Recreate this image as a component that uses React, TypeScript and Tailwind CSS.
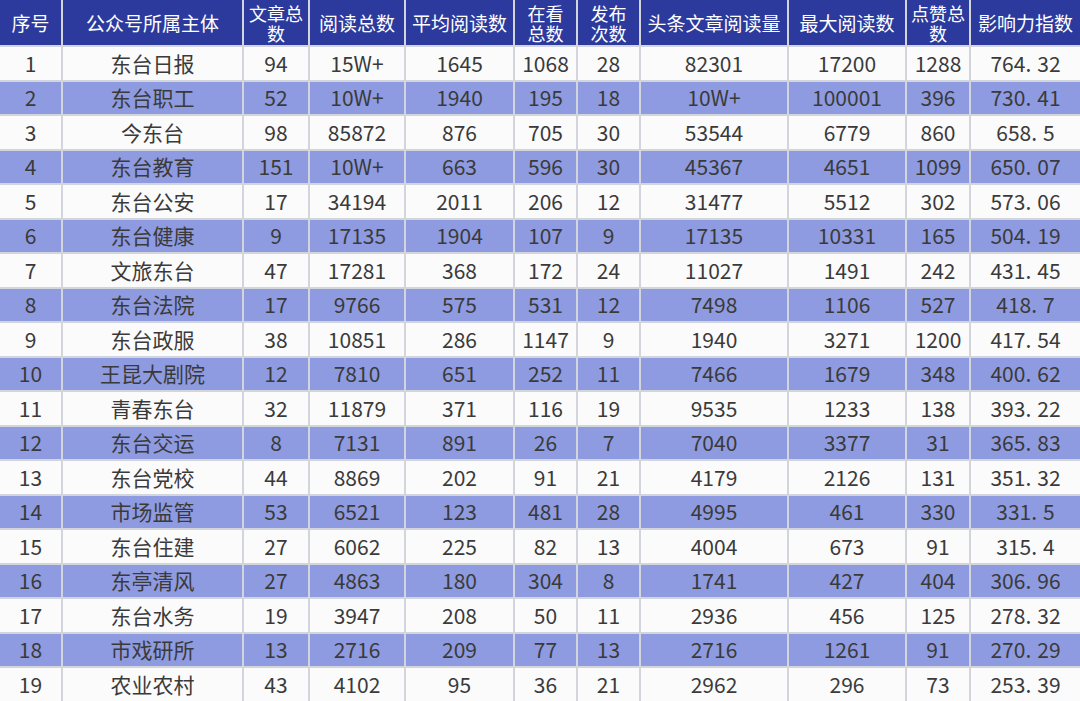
const HEADERS: string[][] = [
  ["序号"],
  ["公众号所属主体"],
  ["文章总", "数"],
  ["阅读总数"],
  ["平均阅读数"],
  ["在看", "总数"],
  ["发布", "次数"],
  ["头条文章阅读量"],
  ["最大阅读数"],
  ["点赞总", "数"],
  ["影响力指数"],
];

const ROWS: string[][] = [
  ["1", "东台日报", "94", "15W+", "1645", "1068", "28", "82301", "17200", "1288", "764.32"],
  ["2", "东台职工", "52", "10W+", "1940", "195", "18", "10W+", "100001", "396", "730.41"],
  ["3", "今东台", "98", "85872", "876", "705", "30", "53544", "6779", "860", "658.5"],
  ["4", "东台教育", "151", "10W+", "663", "596", "30", "45367", "4651", "1099", "650.07"],
  ["5", "东台公安", "17", "34194", "2011", "206", "12", "31477", "5512", "302", "573.06"],
  ["6", "东台健康", "9", "17135", "1904", "107", "9", "17135", "10331", "165", "504.19"],
  ["7", "文旅东台", "47", "17281", "368", "172", "24", "11027", "1491", "242", "431.45"],
  ["8", "东台法院", "17", "9766", "575", "531", "12", "7498", "1106", "527", "418.7"],
  ["9", "东台政服", "38", "10851", "286", "1147", "9", "1940", "3271", "1200", "417.54"],
  ["10", "王昆大剧院", "12", "7810", "651", "252", "11", "7466", "1679", "348", "400.62"],
  ["11", "青春东台", "32", "11879", "371", "116", "19", "9535", "1233", "138", "393.22"],
  ["12", "东台交运", "8", "7131", "891", "26", "7", "7040", "3377", "31", "365.83"],
  ["13", "东台党校", "44", "8869", "202", "91", "21", "4179", "2126", "131", "351.32"],
  ["14", "市场监管", "53", "6521", "123", "481", "28", "4995", "461", "330", "331.5"],
  ["15", "东台住建", "27", "6062", "225", "82", "13", "4004", "673", "91", "315.4"],
  ["16", "东亭清风", "27", "4863", "180", "304", "8", "1741", "427", "404", "306.96"],
  ["17", "东台水务", "19", "3947", "208", "50", "11", "2936", "456", "125", "278.32"],
  ["18", "市戏研所", "13", "2716", "209", "77", "13", "2716", "1261", "91", "270.29"],
  ["19", "农业农村", "43", "4102", "95", "36", "21", "2962", "296", "73", "253.39"],
];

// index value: the period in the source font is wide, so give it some room
function Score({ value }: { value: string }) {
  const [whole, frac] = value.split(".");
  return (
    <span>
      {whole}
      <span className="mr-[6px]">.</span>
      {frac}
    </span>
  );
}

export default function App() {
  return (
    <div
      className="h-[701px] w-[1080px] overflow-hidden bg-[#d3d5dc]"
      style={{ fontFamily: '"Noto Sans CJK SC", "Noto Sans", sans-serif' }}
    >
      <div className="grid grid-cols-[61px_179px_64px_94px_107px_61px_61px_146px_116px_62px_109px] gap-[2px]">
        {HEADERS.map((lines, i) => (
          <div
            key={i}
            className={
              "flex h-[45px] flex-col items-center justify-center bg-[#2c3a9d] text-white " +
              (lines.length > 1 ? "text-[18px] leading-[20px]" : "text-[19px] leading-[22px]")
            }
          >
            {lines.map((l) => (
              <span key={l}>{l}</span>
            ))}
          </div>
        ))}
        {ROWS.map((row, r) =>
          row.map((cell, c) => (
            <div
              key={`${r}-${c}`}
              className={
                "flex h-[32.5px] items-center justify-center text-[21px] text-[#3a3a3a] " +
                (r % 2 === 1 ? "bg-[#8f9be0]" : "bg-[#fbfbfc]")
              }
            >
              {c === 10 && cell.includes(".") ? <Score value={cell} /> : cell}
            </div>
          )),
        )}
      </div>
    </div>
  );
}
